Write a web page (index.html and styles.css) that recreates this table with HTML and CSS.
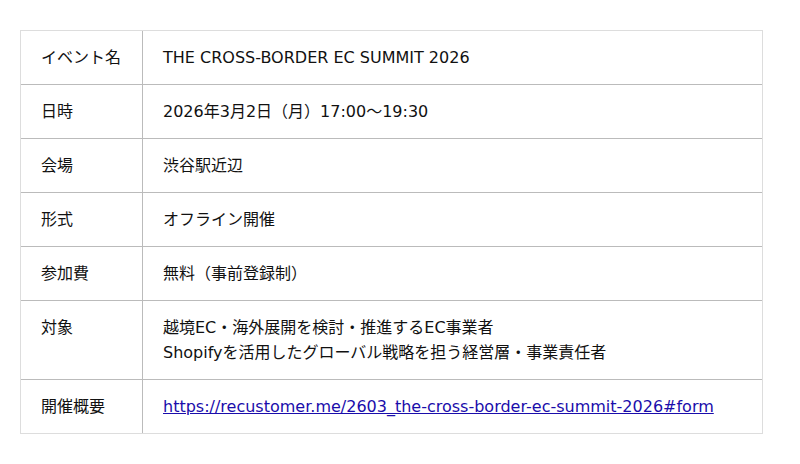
FILE: index.html
```html
<!DOCTYPE html>
<html>
<head>
<meta charset="utf-8">
<link rel="stylesheet" href="styles.css">
</head>
<body>
<table class="info">
  <tbody>
    <tr><th class="label">イベント名</th><td class="value">THE CROSS-BORDER EC SUMMIT 2026</td></tr>
    <tr><th class="label">日時</th><td class="value">2026年3月2日（月）17:00〜19:30</td></tr>
    <tr><th class="label">会場</th><td class="value">渋谷駅近辺</td></tr>
    <tr><th class="label">形式</th><td class="value">オフライン開催</td></tr>
    <tr><th class="label">参加費</th><td class="value">無料（事前登録制）</td></tr>
    <tr><th class="label">対象</th><td class="value">越境EC・海外展開を検討・推進するEC事業者<br>Shopifyを活用したグローバル戦略を担う経営層・事業責任者</td></tr>
    <tr><th class="label">開催概要</th><td class="value"><a class="link" href="#">https://recustomer.me/2603_the-cross-border-ec-summit-2026#form</a></td></tr>
  </tbody>
</table>
</body>
</html>
```
FILE: styles.css
```css
html, body {
  margin: 0;
  background: #fff;
}
body {
  padding: 30px 20px;
  font-family: "DejaVu Sans", "Noto Sans CJK JP", sans-serif;
  font-size: 16px;
  color: #111;
}
.info {
  width: 743px;
  border-collapse: separate;
  border-spacing: 0;
  border: 1px solid #ddd;
}
.label, .value {
  padding: 14px 20px;
  line-height: 25px;
  text-align: left;
  vertical-align: top;
  font-weight: normal;
  border-bottom: 1px solid #bbb;
}
tr:last-child .label, tr:last-child .value {
  border-bottom: none;
}
.label {
  width: 81px;
  border-right: 1px solid #bbb;
}
.link {
  color: #1a0dab;
}
```
